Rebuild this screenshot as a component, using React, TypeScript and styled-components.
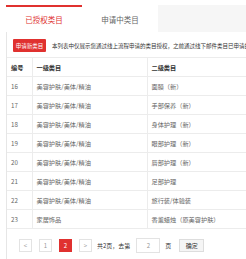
import styled, { createGlobalStyle } from 'styled-components';

const RED = '#e0312f';

const GlobalStyle = createGlobalStyle`
  html, body {
    margin: 0;
    padding: 0;
    background: #fff;
  }
  body {
    font-family: "Noto Sans CJK SC", "Liberation Sans", sans-serif;
    color: #666;
  }
`;

const rows = [
  { id: 16, first: '美容护肤/美体/精油', second: '面膜（新）' },
  { id: 17, first: '美容护肤/美体/精油', second: '手部保养（新）' },
  { id: 18, first: '美容护肤/美体/精油', second: '身体护理（新）' },
  { id: 19, first: '美容护肤/美体/精油', second: '眼部护理（新）' },
  { id: 20, first: '美容护肤/美体/精油', second: '唇部护理（新）' },
  { id: 21, first: '美容护肤/美体/精油', second: '足部护理' },
  { id: 22, first: '美容护肤/美体/精油', second: '旅行装/体验装' },
  { id: 23, first: '家居饰品', second: '香薰蜡烛（原美容护肤）' },
];

export default function App(): JSX.Element {
  return (
    <Page>
      <GlobalStyle />
      <TabBar>
        <Tab $active>已授权类目</Tab>
        <Tab>申请中类目</Tab>
      </TabBar>
      <Panel>
        <Toolbar>
          <ApplyButton>申请新类目</ApplyButton>
          <Notice>本列表中仅展示您通过线上流程申请的类目授权，之前通过线下邮件类目已申请的类目</Notice>
        </Toolbar>
        <Table>
          <thead>
            <tr>
              <HeadCell style={{ width: 25 }}>编号</HeadCell>
              <HeadCell style={{ width: 115 }}>一级类目</HeadCell>
              <HeadCell>二级类目</HeadCell>
            </tr>
          </thead>
          <tbody>
            {rows.map((row) => (
              <tr key={row.id}>
                <Cell>{row.id}</Cell>
                <Cell>{row.first}</Cell>
                <Cell>{row.second}</Cell>
              </tr>
            ))}
          </tbody>
        </Table>
        <Pager>
          <PageBox>&lt;</PageBox>
          <PageBox>1</PageBox>
          <PageBox $current>2</PageBox>
          <PageBox>&gt;</PageBox>
          <PagerText>共2页，去第</PagerText>
          <PageInput defaultValue="2" />
          <PagerText>页</PagerText>
          <ConfirmButton>确定</ConfirmButton>
        </Pager>
      </Panel>
    </Page>
  );
}

const Page = styled.div`
  width: 246px;
  height: 259px;
  overflow: hidden;
  padding: 5px 0 0 6px;
  box-sizing: border-box;
`;

const TabBar = styled.div`
  display: flex;
  width: 400px;
  height: 27px;
  background: #f6f6f6;
`;

const Tab = styled.div<{ $active?: boolean }>`
  width: 76px;
  display: flex;
  align-items: center;
  justify-content: center;
  box-sizing: border-box;
  background: #fff;
  border-top: 2px solid ${(p) => (p.$active ? RED : '#fff')};
  color: ${(p) => (p.$active ? RED : '#666')};
  font-size: 7.5px;
`;

const Panel = styled.div`
  width: 400px;
  border-left: 1px solid #e6e6e6;
  border-bottom: 1px solid #e6e6e6;
  box-sizing: border-box;
  padding-bottom: 7px;
`;

const Toolbar = styled.div`
  display: flex;
  align-items: center;
  gap: 6px;
  padding: 7px 0 5px 6px;
  white-space: nowrap;
  overflow: hidden;
`;

const ApplyButton = styled.div`
  width: 33px;
  height: 13px;
  background: ${RED};
  color: #fff;
  font-size: 5.5px;
  display: flex;
  align-items: center;
  justify-content: center;
  border-radius: 1px;
  flex-shrink: 0;
`;

const Notice = styled.span`
  font-size: 5.5px;
  color: #333;
`;

const Table = styled.table`
  width: 400px;
  border-collapse: collapse;
  table-layout: fixed;
`;

const HeadCell = styled.th`
  height: 19px;
  padding: 0 0 0 4px;
  text-align: left;
  font-weight: 600;
  font-size: 6.2px;
  color: #333;
  border-top: 1px solid #ececec;
  border-bottom: 1px solid #ececec;
  border-right: 1px solid #ececec;
  box-sizing: border-box;
`;

const Cell = styled.td`
  height: 19px;
  padding: 0 0 0 4px;
  font-size: 6.2px;
  color: #666;
  border-bottom: 1px solid #ececec;
  border-right: 1px solid #ececec;
  box-sizing: border-box;
  white-space: nowrap;
`;

const Pager = styled.div`
  display: flex;
  align-items: center;
  padding: 9px 0 0 12px;
  gap: 7px;
`;

const PageBox = styled.div<{ $current?: boolean }>`
  width: 13px;
  height: 13px;
  box-sizing: border-box;
  display: flex;
  align-items: center;
  justify-content: center;
  font-size: 6px;
  border: 1px solid ${(p) => (p.$current ? RED : '#e3e3e3')};
  background: ${(p) => (p.$current ? RED : '#fff')};
  color: ${(p) => (p.$current ? '#fff' : '#999')};
`;

const PagerText = styled.span`
  font-size: 6px;
  color: #333;
  margin-left: -2px;
  margin-right: -4px;
`;

const PageInput = styled.input`
  width: 24px;
  height: 15px;
  box-sizing: border-box;
  border: 1px solid #e3e3e3;
  font-size: 6px;
  color: #999;
  text-align: center;
  padding: 0;
  margin-left: 3px;
  font-family: inherit;
`;

const ConfirmButton = styled.div`
  width: 25px;
  height: 13px;
  box-sizing: border-box;
  border: 1px solid #ddd;
  background: #f5f5f5;
  font-size: 6px;
  color: #333;
  display: flex;
  align-items: center;
  justify-content: center;
  margin-left: 5px;
`;
